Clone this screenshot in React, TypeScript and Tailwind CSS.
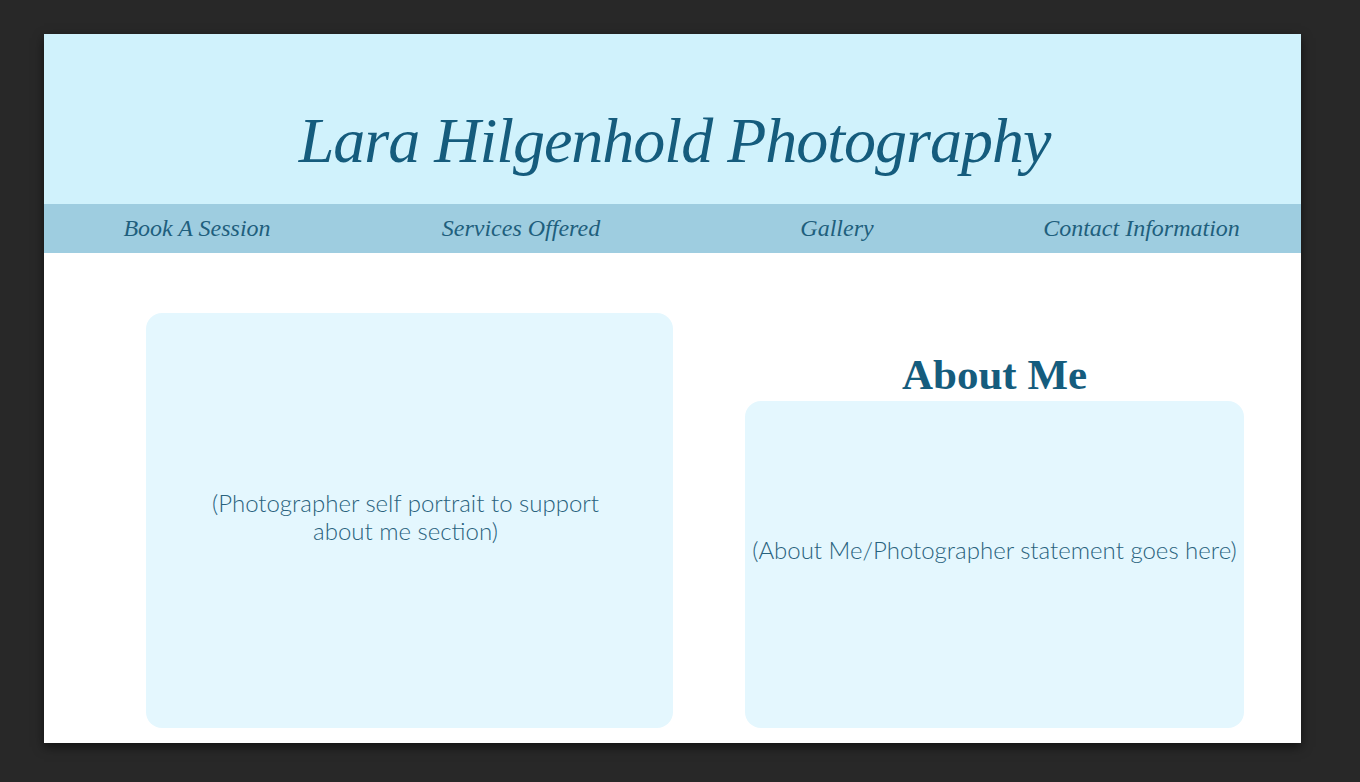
import React from "react";

const serif = { fontFamily: '"Liberation Serif", "DejaVu Serif", serif' };
const sans = { fontFamily: 'Lato, "Open Sans", sans-serif' };

export default function App() {
  const nav = ["Book A Session", "Services Offered", "Gallery", "Contact Information"];
  return (
    <div className="w-[1360px] h-[782px] bg-[#282828] overflow-hidden pt-[34px] pl-[44px]">
      <div className="w-[1257px] h-[709px] bg-white flex flex-col shadow-[0_4px_10px_rgba(0,0,0,0.55)]">
        <header className="h-[170px] bg-[#d0f2fc] pt-[75px] flex justify-center">
          <h1 style={serif} className="italic text-[64px] leading-none tracking-[-1px] text-[#155c7d] pl-[4px]">
            Lara Hilgenhold Photography
          </h1>
        </header>
        <nav className="h-[49px] bg-[#9ecde0] grid grid-cols-[306px_342px_290px_319px] items-center">
          {nav.map((n) => (
            <div key={n} style={serif} className="italic text-[24px] leading-none text-[#1f5f7d] text-center pb-[1px]">
              {n}
            </div>
          ))}
        </nav>
        <main className="flex pl-[102px] pt-[60px]">
          <div className="w-[527px] h-[415px] bg-[#e4f7fe] rounded-[16px] flex items-center justify-center pb-[8px] pr-[8px]">
            <p style={sans} className="text-[24px] leading-[28px] font-light text-[#29627d] text-center">
              (Photographer self portrait to support
              <br />
              about me section)
            </p>
          </div>
          <div className="ml-[72px] w-[499px] flex flex-col">
            <h2 style={serif} className="font-bold text-[43px] leading-none text-[#155c7d] text-center mt-[40px] mb-[5px]">
              About Me
            </h2>
            <div className="h-[327px] bg-[#e4f7fe] rounded-[16px] flex items-center justify-center pb-[30px]">
              <p style={sans} className="text-[24px] leading-[28px] font-light text-[#29627d] text-center whitespace-nowrap">
                (About Me/Photographer statement goes here)
              </p>
            </div>
          </div>
        </main>
      </div>
    </div>
  );
}
